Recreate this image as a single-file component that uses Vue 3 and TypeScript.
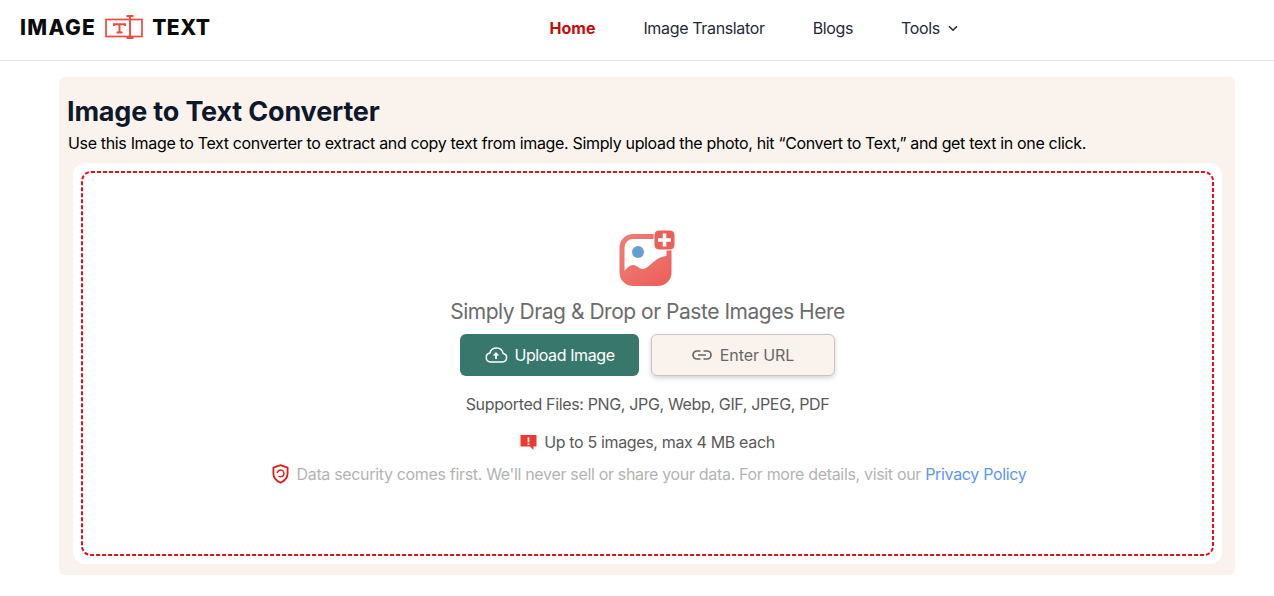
<template>
  <!-- nav -->
  <header class="topbar">
    <div class="logo">
      <span class="logo-word image">IMAGE</span>
      <svg class="logo-mark" width="38" height="26" viewBox="0 0 38 26" fill="none" stroke="#ee4b3e">
        <rect x="1" y="5.500" width="36" height="17" stroke-width="1.700" />
        <path d="M25 2.500v21M21.500 2h7M21.500 24h7" stroke-width="1.900" />
        <path d="M9 12v-1.800h11V12M14.500 10.500v8M11.500 18.500h6" stroke-width="2" />
      </svg>
      <span class="logo-word">TEXT</span>
    </div>
    <nav class="nav">
      <a class="nav-link active">Home</a>
      <a class="nav-link">Image Translator</a>
      <a class="nav-link">Blogs</a>
      <a class="nav-link tools">
        Tools
        <svg width="10" height="7" viewBox="0 0 10 7" fill="none" stroke="#1f2937" stroke-width="1.500">
          <path d="M1 1.200l4 4 4-4" />
        </svg>
      </a>
    </nav>
  </header>
  <!-- main -->
  <main class="page">
    <section class="panel">
      <h1>Image to Text Converter</h1>
      <p class="lead">
        Use this Image to Text converter to extract and copy text from image. Simply upload the photo, hit “Convert to Text,” and get text in one click.
      </p>
      <div class="card">
        <div class="dropzone">
          <svg class="dash" width="100%" height="100%">
            <rect x="1" y="1" width="1131" height="383" rx="9" fill="none" stroke="#e60d1c" stroke-width="2" stroke-dasharray="4 2" />
          </svg>
          <svg class="drop-icon" width="57" height="58" viewBox="0 0 57 58">
            <defs>
              <linearGradient id="pic" x1="0" y1="0" x2="1" y2="1">
                <stop offset="0" stop-color="#ef7d76" />
                <stop offset="1" stop-color="#ec5f58" />
              </linearGradient>
            </defs>
            <rect x="3" y="7.500" width="47" height="47" rx="11" fill="#fff" stroke="url(#pic)" stroke-width="5" />
            <path d="M3 45c2-3 7-9 11-9s6 4 10 4c5 0 11-10 19-12l7-2v18c0 6-4 10-10 10H13C7 54 3 51 3 45z" fill="url(#pic)" />
            <circle cx="19" cy="23" r="6" fill="#659ed4" />
            <rect x="35" y="1" width="21" height="20" rx="5" fill="#ec5f58" stroke="#fff" stroke-width="1" />
            <path d="M45.500 4.500v13M39 11h13" stroke="#fff" stroke-width="3.600" />
          </svg>
          <p class="drop-title">Simply Drag &amp; Drop or Paste Images Here</p>
          <div class="actions">
            <button class="btn upload" type="button">
              <svg width="24" height="16" viewBox="0 0 24 16" fill="none" stroke="#fff" stroke-width="1.500">
                <path d="M6 15h12.500a4.300 4.300 0 0 0 .7-8.500A7 7 0 0 0 12.500 1a7 7 0 0 0-6.700 5A4.600 4.600 0 0 0 6 15z" />
                <path d="M12 12V6.500" stroke-width="1.800" />
                <path d="M8.700 8.500h6.600L12 5z" fill="#fff" stroke="none" />
              </svg>
              Upload Image
            </button>
            <button class="btn url" type="button">
              <svg width="20" height="10" viewBox="0 0 20 10" fill="none" stroke="#666" stroke-width="1.700">
                <path d="M8.500 1H5a4 4 0 0 0 0 8h3.500M11.500 1H15a4 4 0 0 1 0 8h-3.500M6 5h8" />
              </svg>
              Enter URL
            </button>
          </div>
          <p class="supported">Supported Files: PNG, JPG, Webp, GIF, JPEG, PDF</p>
          <p class="limit">
            <svg width="17" height="17" viewBox="0 0 17 17">
              <path d="M0.500 1h16v11.500h-3v3.500l-3.500-3.500H0.500z" fill="#ea3b30" />
              <path d="M8.500 3.200v5M8.500 9.500v1.600" stroke="#fff" stroke-width="1.700" />
            </svg>
            Up to 5 images, max 4 MB each
          </p>
          <p class="security">
            <svg width="17" height="20" viewBox="0 0 18 21" fill="none" stroke="#e8170f">
              <path d="M9 1.200l7.500 2.600v6.200c0 4.600-3.200 7.900-7.500 9.800-4.300-1.900-7.500-5.200-7.500-9.800V3.800z" stroke-width="1.900" />
              <path d="M5.500 9.500a3.600 3.600 0 1 1 1.500 3.300M9 6.500" stroke-width="1.500" />
            </svg>
            <span>Data security comes first. We'll never sell or share your data. For more details, visit our <a>Privacy Policy</a></span>
          </p>
        </div>
      </div>
    </section>
  </main>
</template>

<script setup lang="ts">
</script>

<style scoped>
.topbar {
  height: 60px;
  border-bottom: 1px solid #e2e3e8;
  display: flex;
  align-items: center;
  background: #fff;
}

.logo {
  display: flex;
  align-items: center;
  gap: 9px;
  margin-left: 20px;
  margin-top: -6px;
}

.logo-word {
  font-family: "Inter", sans-serif;
  font-weight: 800;
  font-size: 21px;
  letter-spacing: 0.5px;
  color: #0b0b0b;
}

.logo-word.image {
  letter-spacing: 1.300px;
}

.nav {
  display: flex;
  align-items: center;
  gap: 48px;
  margin-left: 339px;
  margin-top: -4px;
}

.nav-link {
  font-family: "Inter", sans-serif;
  font-size: 16px;
  letter-spacing: -0.35px;
  color: #1f2937;
}

.nav-link.active {
  color: #c70a0a;
  font-weight: 700;
  letter-spacing: 0;
}

.tools {
  display: flex;
  align-items: center;
  gap: 8px;
}

.page {
  padding: 16px 39px 0 59px;
}

.panel {
  height: 498px;
  background: #faf3ed;
  border-radius: 6px;
  padding: 19px 13px 11px 14px;
  box-sizing: border-box;
}

h1 {
  margin: 0 0 0 -6px;
  font-family: "Inter", sans-serif;
  font-size: 27px;
  letter-spacing: -0.18px;
  line-height: 32px;
  font-weight: 700;
  color: #0f172a;
}

.lead {
  margin: 3px 0 0 -5px;
  font-family: "Inter", sans-serif;
  font-size: 16px;
  letter-spacing: -0.34px;
  line-height: 24px;
  color: #000;
  white-space: nowrap;
}

.card {
  margin-top: 8px;
  height: 401px;
  background: #fff;
  border-radius: 12px;
  padding: 8px;
  box-sizing: border-box;
}

.dropzone {
  position: relative;
  height: 100%;
  box-sizing: border-box;
  display: flex;
  flex-direction: column;
  align-items: center;
  padding-top: 58px;
  font-family: "Inter", sans-serif;
  font-size: 16px;
  letter-spacing: -0.35px;
}

.dash {
  position: absolute;
  inset: 0;
}

.drop-icon {
  display: block;
}

.drop-title {
  margin: 11px 0 0;
  font-size: 21px;
  letter-spacing: -0.47px;
  line-height: 28px;
  color: #6b6b6b;
}

.actions {
  display: flex;
  gap: 12px;
  margin-top: 8px;
}

.btn {
  height: 42px;
  border-radius: 6px;
  display: flex;
  align-items: center;
  justify-content: center;
  gap: 6px;
  font-family: "Inter", sans-serif;
  font-size: 16px;
  box-sizing: border-box;
  padding: 0;
}

.upload {
  width: 179px;
  background: #38786c;
  border: none;
  color: #fff;
  letter-spacing: -0.4px;
}

.url {
  width: 184px;
  background: #faf3ed;
  border: 1px solid #cbc3be;
  color: #666;
  gap: 8px;
  letter-spacing: -0.1px;
  box-shadow: 0 2px 5px rgba(0, 0, 0, 0.18);
}

.supported {
  margin: 17px 0 0;
  line-height: 22px;
  color: #595959;
}

.limit {
  margin: 16px 0 0;
  display: flex;
  align-items: center;
  gap: 7px;
  line-height: 22px;
  color: #595959;
}

.security {
  margin: 10px 0 0 3px;
  display: flex;
  align-items: center;
  gap: 8px;
  line-height: 22px;
  letter-spacing: -0.33px;
  color: #b3b3b3;
}

.security a {
  color: #5b95f5;
}
</style>
